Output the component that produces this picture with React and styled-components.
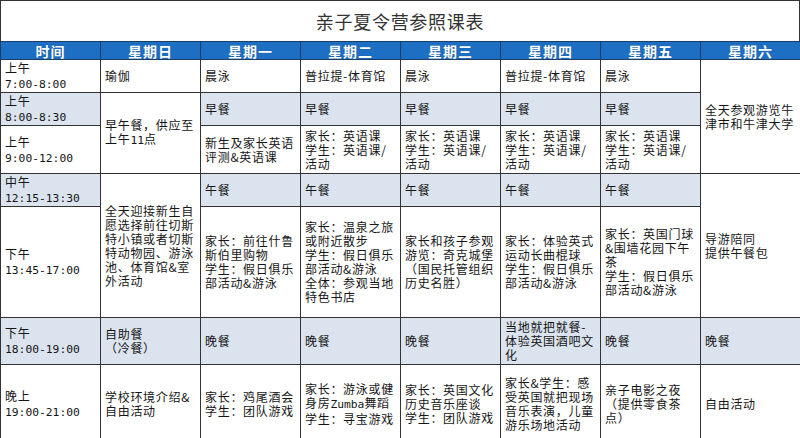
import React from "react";
import styled, { createGlobalStyle } from "styled-components";

const Global = createGlobalStyle`
  html, body { margin: 0; padding: 0; background: #fff; }
  * { box-sizing: border-box; }
`;

const Page = styled.div`
  width: 800px;
  font-family: "Noto Sans CJK SC", "Noto Sans", sans-serif;
  color: #151515;
`;

const TitleBar = styled.div`
  height: 41px;
  border: 1px solid #333;
  border-bottom: none;
  display: flex;
  align-items: center;
  justify-content: center;
  font-size: 18px;
  letter-spacing: 0.7px;
  color: #333;
`;

const Table = styled.table`
  width: 800px;
  border-collapse: collapse;
  table-layout: fixed;
`;

const Row = styled.tr`
  height: ${(p) => p.$h}px;
`;

const HeadCell = styled.th`
  background: #1d6fc3;
  color: #fff;
  font-weight: 700;
  font-size: 14px;
  letter-spacing: 1px;
  line-height: 16px;
  padding: 0;
  border: 1px solid #1b3d63;
  text-align: center;
  text-shadow: 0 0 1px rgba(0, 40, 90, 0.5);
`;

const Cell = styled.td`
  border: 1px solid #333;
  padding: 0 1px 0 4px;
  vertical-align: middle;
  font-size: 12px;
  letter-spacing: 0.7px;
  line-height: 14px;
  text-align: left;
  background: ${(p) => (p.$shade ? "#dbe3ee" : "#fff")};
  color: #151515;
  overflow: hidden;
`;

const TimeCell = styled(Cell)`
  line-height: 15px;
`;

const Lat = styled.span`
  font-family: "DejaVu Sans Mono", "Liberation Mono", monospace;
  font-size: 11.3px;
  letter-spacing: 0;
`;

const lines = (arr) =>
  arr.map((l, i) => (
    <React.Fragment key={i}>
      {i > 0 && <br />}
      {l}
    </React.Fragment>
  ));

const T = ({ label, time, shade }) => (
  <TimeCell $shade={shade}>
    {label}
    <br />
    <Lat>{time}</Lat>
  </TimeCell>
);

const C = ({ children, shade, rowSpan }) => (
  <Cell $shade={shade} rowSpan={rowSpan}>
    {Array.isArray(children) ? lines(children) : children}
  </Cell>
);

const days = ["时间", "星期日", "星期一", "星期二", "星期三", "星期四", "星期五", "星期六"];

const engClass = ["家长：英语课", "学生：英语课/", "活动"];

export default function App() {
  return (
    <Page>
      <Global />
      <TitleBar>亲子夏令营参照课表</TitleBar>
      <Table>
        <colgroup>
          {days.map((d) => (
            <col key={d} style={{ width: "100px" }} />
          ))}
        </colgroup>
        <tbody>
          <Row $h={18}>
            {days.map((d) => (
              <HeadCell key={d}>{d}</HeadCell>
            ))}
          </Row>
          <Row $h={32}>
            <T label="上午" time="7:00-8:00" />
            <C>瑜伽</C>
            <C>晨泳</C>
            <C>普拉提-体育馆</C>
            <C>晨泳</C>
            <C>普拉提-体育馆</C>
            <C>晨泳</C>
            <C rowSpan={3}>{["全天参观游览牛", "津市和牛津大学"]}</C>
          </Row>
          <Row $h={30}>
            <T label="上午" time="8:00-8:30" shade />
            <Cell rowSpan={2}>
              早午餐，供应至
              <br />
              上午<Lat>11</Lat>点
            </Cell>
            <C shade>早餐</C>
            <C shade>早餐</C>
            <C shade>早餐</C>
            <C shade>早餐</C>
            <C shade>早餐</C>
          </Row>
          <Row $h={48}>
            <T label="上午" time="9:00-12:00" />
            <C>{["新生及家长英语", "评测&英语课"]}</C>
            <C>{engClass}</C>
            <C>{engClass}</C>
            <C>{engClass}</C>
            <C>{engClass}</C>
          </Row>
          <Row $h={31}>
            <T label="中午" time="12:15-13:30" shade />
            <C rowSpan={2}>
              {["全天迎接新生自", "愿选择前往切斯", "特小镇或者切斯", "特动物园、游泳", "池、体育馆&室", "外活动"]}
            </C>
            <C shade>午餐</C>
            <C shade>午餐</C>
            <C shade>午餐</C>
            <C shade>午餐</C>
            <C shade>午餐</C>
            <C rowSpan={2}>{["导游陪同", "提供午餐包"]}</C>
          </Row>
          <Row $h={111}>
            <T label="下午" time="13:45-17:00" />
            <C>{["家长：前往什鲁", "斯伯里购物", "学生：假日俱乐", "部活动&游泳"]}</C>
            <C>
              {["家长：温泉之旅", "或附近散步", "学生：假日俱乐", "部活动&游泳", "全体：参观当地", "特色书店"]}
            </C>
            <C>{["家长和孩子参观", "游览：奇克城堡", "（国民托管组织", "历史名胜）"]}</C>
            <C>{["家长：体验英式", "运动长曲棍球", "学生：假日俱乐", "部活动&游泳"]}</C>
            <C>{["家长：英国门球", "&围墙花园下午", "茶", "学生：假日俱乐", "部活动&游泳"]}</C>
          </Row>
          <Row $h={47}>
            <T label="下午" time="18:00-19:00" shade />
            <C shade>{["自助餐", "（冷餐）"]}</C>
            <C shade>晚餐</C>
            <C shade>晚餐</C>
            <C shade>晚餐</C>
            <C shade>{["当地就把就餐-", "体验英国酒吧文", "化"]}</C>
            <C shade>晚餐</C>
            <C shade>晚餐</C>
          </Row>
          <Row $h={79}>
            <T label="晚上" time="19:00-21:00" />
            <C>{["学校环境介绍&", "自由活动"]}</C>
            <C>{["家长：鸡尾酒会", "学生：团队游戏"]}</C>
            <Cell>
              家长：游泳或健
              <br />
              身房<Lat>Zumba</Lat>舞蹈
              <br />
              学生：寻宝游戏
            </Cell>
            <C>{["家长：英国文化", "历史音乐座谈", "学生：团队游戏"]}</C>
            <C>{["家长&学生：感", "受英国就把现场", "音乐表演，儿童", "游乐场地活动"]}</C>
            <C>{["亲子电影之夜", "（提供零食茶", "点）"]}</C>
            <C>自由活动</C>
          </Row>
        </tbody>
      </Table>
    </Page>
  );
}
